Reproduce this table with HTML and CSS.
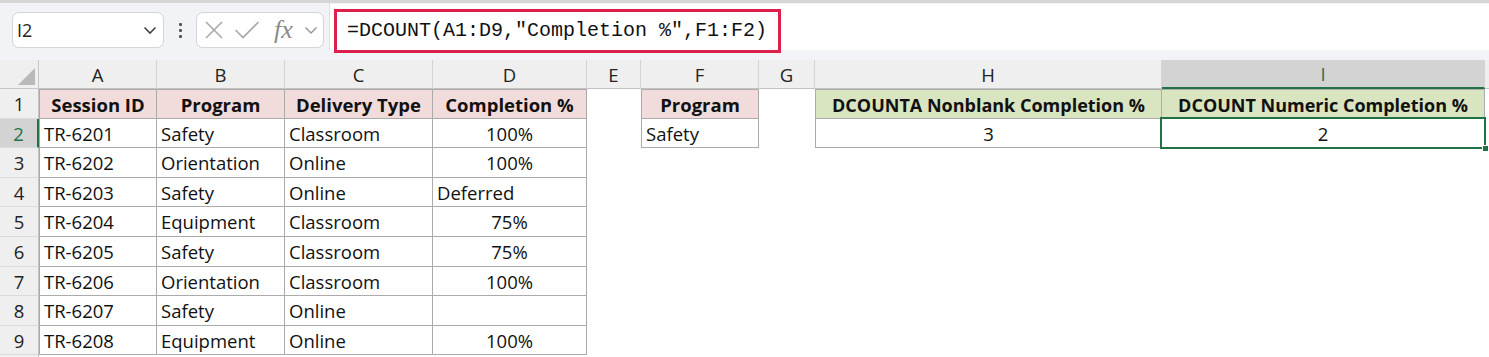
FILE: index.html
```html
<!DOCTYPE html>
<html>
<head>
<meta charset="utf-8">
<link rel="stylesheet" href="styles.css">
</head>
<body>
<div class="app">
  <div class="topline"></div>
  <div class="toolbar">
    <div class="tb-left">
      <div class="namebox">
        <span class="nb-text">I2</span>
        <svg class="chev" width="14" height="9" viewBox="0 0 14 9"><path d="M1.5 1.5 L7 7 L12.5 1.5" fill="none" stroke="#444" stroke-width="1.6"/></svg>
      </div>
      <div class="dots"><i></i><i></i><i></i></div>
      <div class="fxbox">
        <svg width="20" height="20" viewBox="0 0 20 20"><path d="M2 2 L18 18 M18 2 L2 18" stroke="#a8a8a8" stroke-width="1.6" fill="none"/></svg>
        <svg width="26" height="20" viewBox="0 0 26 20"><path d="M1.5 10 L9 17.5 L24.5 2" stroke="#a8a8a8" stroke-width="1.6" fill="none"/></svg>
        <span class="fx">fx</span>
        <svg class="fxchev" width="14" height="9" viewBox="0 0 14 9"><path d="M1.5 1.5 L7 7 L12.5 1.5" fill="none" stroke="#999" stroke-width="1.5"/></svg>
      </div>
    </div>
    <div class="formula">
      <span class="ftext">=DCOUNT(A1:D9,"Completion %",F1:F2)</span>
    </div>
    <div class="highlight"></div>
  </div>
  <div class="grid">
    <div class="corner"><span class="tri"></span></div>
    <div class="ch">A</div><div class="ch">B</div><div class="ch">C</div><div class="ch">D</div><div class="ch">E</div><div class="ch">F</div><div class="ch">G</div><div class="ch">H</div><div class="ch csel">I</div><div class="ch last"></div>

    <div class="rh">1</div>
    <div class="c b bl bt hp">Session ID</div><div class="c b bt hp">Program</div><div class="c b bt hp">Delivery Type</div><div class="c b bt hp">Completion %</div><div class="c"></div><div class="c b bl bt hp">Program</div><div class="c"></div><div class="c b bl bt hg">DCOUNTA Nonblank Completion %</div><div class="c b bt hg">DCOUNT Numeric Completion %</div><div class="c"></div>

    <div class="rh rsel">2</div>
    <div class="c b bl">TR-6201</div><div class="c b">Safety</div><div class="c b">Classroom</div><div class="c b ctr">100%</div><div class="c"></div><div class="c b bl">Safety</div><div class="c"></div><div class="c b bl ctr">3</div><div class="c b ctr sc">2<span class="sel"><span class="handle"></span></span></div><div class="c"></div>

    <div class="rh">3</div>
    <div class="c b bl">TR-6202</div><div class="c b">Orientation</div><div class="c b">Online</div><div class="c b ctr">100%</div><div class="c"></div><div class="c"></div><div class="c"></div><div class="c"></div><div class="c"></div><div class="c"></div>

    <div class="rh">4</div>
    <div class="c b bl">TR-6203</div><div class="c b">Safety</div><div class="c b">Online</div><div class="c b">Deferred</div><div class="c"></div><div class="c"></div><div class="c"></div><div class="c"></div><div class="c"></div><div class="c"></div>

    <div class="rh">5</div>
    <div class="c b bl">TR-6204</div><div class="c b">Equipment</div><div class="c b">Classroom</div><div class="c b ctr">75%</div><div class="c"></div><div class="c"></div><div class="c"></div><div class="c"></div><div class="c"></div><div class="c"></div>

    <div class="rh">6</div>
    <div class="c b bl">TR-6205</div><div class="c b">Safety</div><div class="c b">Classroom</div><div class="c b ctr">75%</div><div class="c"></div><div class="c"></div><div class="c"></div><div class="c"></div><div class="c"></div><div class="c"></div>

    <div class="rh">7</div>
    <div class="c b bl">TR-6206</div><div class="c b">Orientation</div><div class="c b">Classroom</div><div class="c b ctr">100%</div><div class="c"></div><div class="c"></div><div class="c"></div><div class="c"></div><div class="c"></div><div class="c"></div>

    <div class="rh">8</div>
    <div class="c b bl">TR-6207</div><div class="c b">Safety</div><div class="c b">Online</div><div class="c b ctr"></div><div class="c"></div><div class="c"></div><div class="c"></div><div class="c"></div><div class="c"></div><div class="c"></div>

    <div class="rh">9</div>
    <div class="c b bl">TR-6208</div><div class="c b">Equipment</div><div class="c b">Online</div><div class="c b ctr">100%</div><div class="c"></div><div class="c"></div><div class="c"></div><div class="c"></div><div class="c"></div><div class="c"></div>

    <div class="rh"></div>
    <div class="c"></div><div class="c"></div><div class="c"></div><div class="c"></div><div class="c"></div><div class="c"></div><div class="c"></div><div class="c"></div><div class="c"></div><div class="c"></div>
  </div>
</div>
</body>
</html>
```

FILE: styles.css
```css
* { box-sizing: border-box; }
html, body { margin: 0; padding: 0; background: #ffffff; }
body { width: 1489px; height: 357px; overflow: hidden; font-family: "Open Sans", "Noto Sans", "Liberation Sans", sans-serif; color: #111; }

.app { width: 1489px; }

.topline { height: 3px; background: #d6d6d6; }

.toolbar {
  position: relative;
  display: flex;
  height: 57px;
  background: #f1f3f6;
}
.tb-left {
  width: 330px;
  display: flex;
  align-items: flex-start;
  padding: 9px 0 0 12px;
  border-right: 1px solid #dcdfe3;
  height: 47px;
}
.namebox {
  width: 152px;
  height: 36px;
  background: #fff;
  border: 1px solid #d3d5d8;
  border-radius: 7px;
  display: flex;
  align-items: center;
  justify-content: space-between;
  padding: 0 6px 0 4px;
}
.nb-text { font-size: 18px; color: #222; }
.dots {
  width: 32px;
  height: 36px;
  display: flex;
  flex-direction: column;
  align-items: center;
  justify-content: center;
  gap: 3px;
}
.dots i { display: block; width: 3px; height: 3px; background: #555; border-radius: 1px; }
.fxbox {
  width: 128px;
  height: 36px;
  background: #fff;
  border: 1px solid #d3d5d8;
  border-radius: 7px;
  display: flex;
  align-items: center;
  padding: 0 5px 0 7px;
  gap: 10px;
}
.fx { font-family: "Liberation Serif", serif; font-style: italic; font-size: 26px; color: #8a8a8a; line-height: 1; margin-left: 4px; }
.fxchev { margin-left: auto; }

.formula {
  flex: 1;
  height: 46px;
  margin-top: 1px;
  background: #ffffff;
  display: flex;
  align-items: center;
  padding-left: 17px;
}
.ftext { font-family: "Liberation Mono", "DejaVu Sans Mono", monospace; font-size: 20px; color: #111; position: relative; top: 3px; }

.highlight {
  position: absolute;
  left: 334px;
  top: 6px;
  width: 447px;
  height: 44px;
  border: 3px solid #dd1f4c;
  pointer-events: none;
}

.grid {
  display: grid;
  grid-template-columns: 39px 118px 128px 148px 154px 54px 118px 56px 347px 323px 4px;
  grid-template-rows: 29px repeat(9, 29.6px) 1.6px;
  font-size: 18.5px;
  line-height: 1;
}
.corner {
  background: #efefef;
  border-right: 1px solid #c6c6c6;
  border-bottom: 1px solid #c6c6c6;
  position: relative;
}
.tri {
  position: absolute;
  right: 3px;
  bottom: 3px;
  width: 0; height: 0;
  border-left: 17px solid transparent;
  border-bottom: 17px solid #b9b9b9;
}
.ch {
  background: #efefef;
  border-right: 1px solid #d4d4d4;
  border-bottom: 1px solid #c2c2c2;
  display: flex;
  align-items: center;
  justify-content: center;
  color: #222;
  padding-top: 2px;
}
.ch.last { border-right: none; }
.ch.csel { background: #d3d3d3; color: #217346; border-bottom: 2px solid #217346; }
.rh {
  background: #efefef;
  border-right: 1px solid #c2c2c2;
  border-bottom: 1px solid #dadada;
  display: flex;
  align-items: center;
  justify-content: center;
  color: #222;
  padding-top: 2px;
}
.rh.rsel { background: #d3d3d3; color: #217346; border-right: 2px solid #217346; }

.c {
  display: flex;
  align-items: center;
  padding: 2px 4px 0;
  white-space: nowrap;
  overflow: visible;
  color: #111;
}
.b { border-right: 1px solid #ababab; border-bottom: 1px solid #ababab; }
.bl { border-left: 1px solid #ababab; }
.bt { border-top: 1px solid #ababab; }
.ctr { justify-content: center; }
.hp { background: #f2dcdb; font-weight: 700; justify-content: center; }
.hg { background: #d9e4c0; font-weight: 700; justify-content: center; font-size: 18px; }

.sc { position: relative; }
.sel {
  position: absolute;
  left: -2px; top: -2px; right: -2px; bottom: -2px;
  border: 2px solid #217346;
}
.handle {
  position: absolute;
  right: -5px;
  bottom: -5px;
  width: 7px;
  height: 7px;
  background: #217346;
  border: 1px solid #fff;
}
```
